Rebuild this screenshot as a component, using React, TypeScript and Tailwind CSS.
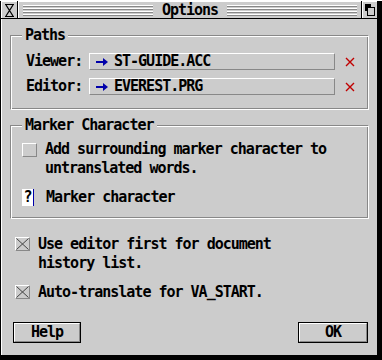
const mono = "font-['DejaVu_Sans_Mono','Liberation_Mono',monospace]";
const groupFrame =
  "border border-t-[#888] border-l-[#888] border-r-white border-b-white shadow-[inset_1px_1px_0_#fff,inset_-1px_-1px_0_#888] p-0 m-0";

function Arrow() {
  return (
    <svg width="12" height="8" viewBox="0 0 12 8" className="shrink-0">
      <path d="M0 3h8v2H0z" fill="#0000aa" />
      <path d="M7 0l5 4-5 4z" fill="#0000aa" />
    </svg>
  );
}

function RemoveMark() {
  return (
    <svg width="10" height="10" viewBox="0 0 10 10" className="shrink-0">
      <path d="M1 1l8 8M9 1l-8 8" stroke="#c00000" strokeWidth="1.4" />
    </svg>
  );
}

function CheckBox({ checked }: { checked?: boolean }) {
  return (
    <div className="w-[15px] h-[14px] shrink-0 border border-t-white border-l-white border-r-[#888] border-b-[#888] bg-[#cccccc] flex items-center justify-center">
      {checked && (
        <svg width="13" height="12" viewBox="0 0 13 12">
          <path d="M0.5 0.5l12 11M12.5 0.5l-12 11" stroke="#444" strokeWidth="1" />
        </svg>
      )}
    </div>
  );
}

function Stripes() {
  return (
    <div className="flex-1 flex flex-col gap-px">
      {[0, 1, 2, 3].map((i) => (
        <div key={i} className="flex flex-col">
          <div className="h-px bg-white" />
          <div className="h-px bg-[#888]" />
        </div>
      ))}
    </div>
  );
}

function PathRow({ label, file }: { label: string; file: string }) {
  return (
    <div className="flex items-center">
      <span className="w-[56px]">{label}</span>
      <div className="ml-[7px] w-[246px] h-[17px] border border-t-white border-l-white border-r-[#888] border-b-[#888] flex items-center pl-[6px]">
        <Arrow />
        <span className="ml-[6px] leading-[15px]">{file}</span>
      </div>
      <div className="ml-[10px]">
        <RemoveMark />
      </div>
    </div>
  );
}

function Button({ children, width }: { children: string; width: string }) {
  return (
    <div className={`${width} h-[21px] border border-black bg-[#cccccc]`}>
      <div className="h-full border border-t-white border-l-white border-r-[#888] border-b-[#888] flex items-center justify-center leading-[15px]">
        {children}
      </div>
    </div>
  );
}

export default function App() {
  return (
    <div className={`w-[382px] h-[360px] bg-black ${mono} text-[15px] leading-[19px] font-bold tracking-[-1px] text-black`}>
      <div className="w-[376px] h-[354px] ml-px mt-px bg-[#cccccc] flex flex-col">
        {/* title bar */}
        <div className="h-[18px] flex border-b border-black">
          <div className="w-[16px] border-t border-l border-white flex items-center justify-center">
            <svg width="9" height="13" viewBox="0 0 9 13">
              <path d="M0 0.5h9M0 12.5h9" stroke="#000" />
              <path d="M1 1l7 11M8 1l-7 11" stroke="#000" strokeWidth="1.3" />
            </svg>
          </div>
          <div className="w-px bg-black" />
          <div className="flex-1 border-t border-l border-white flex items-center px-[4px]">
            <Stripes />
            <span className="px-[9px] leading-[15px]">Options</span>
            <Stripes />
          </div>
          <div className="w-px bg-black" />
          <div className="w-[15px] border-t border-l border-white flex items-center justify-center">
            <svg width="10" height="12" viewBox="0 0 10 12">
              <rect x="0" y="0" width="6" height="7" fill="#000" />
              <rect x="2.5" y="3.5" width="7" height="8" fill="#ccc" stroke="#000" />
            </svg>
          </div>
        </div>

        {/* body */}
        <div className="flex-1 flex flex-col px-[8px] border-l border-white">
          <fieldset className={`mt-[7px] ${groupFrame}`}>
            <legend className="ml-[11px] px-[3px] bg-[#cccccc]">Paths</legend>
            <div className="pt-[7px] pb-[13px] pl-[15px] flex flex-col gap-[6px]">
              <PathRow label="Viewer:" file="ST-GUIDE.ACC" />
              <PathRow label="Editor:" file="EVEREST.PRG" />
            </div>
          </fieldset>

          <fieldset className={`mt-[6px] ${groupFrame}`}>
            <legend className="ml-[11px] px-[3px] bg-[#cccccc]">Marker Character</legend>
            <div className="pt-[5px] pb-[11px] pl-[11px] flex flex-col gap-[10px]">
              <div className="flex items-start">
                <div className="mt-[3px]">
                  <CheckBox />
                </div>
                <span className="ml-[8px]">
                  Add surrounding marker character to
                  <br />
                  untranslated words.
                </span>
              </div>
              <div className="flex items-center">
                <div className="flex items-center">
                  <div className="w-[11px] h-[17px] bg-white flex items-center justify-center leading-[15px]">?</div>
                  <div className="w-px h-[17px] bg-[#0000aa]" />
                </div>
                <span className="ml-[12px]">Marker character</span>
              </div>
            </div>
          </fieldset>

          <div className="mt-[16px] pl-[5px] flex flex-col gap-[10px]">
            <div className="flex items-start">
              <div className="mt-[2px]">
                <CheckBox checked />
              </div>
              <span className="ml-[8px]">
                Use editor first for document
                <br />
                history list.
              </span>
            </div>
            <div className="flex items-start">
              <div className="mt-[2px]">
                <CheckBox checked />
              </div>
              <span className="ml-[8px]">Auto-translate for VA_START.</span>
            </div>
          </div>

          <div className="mt-[20px] pl-[3px] pr-[1px] flex justify-between">
            <Button width="w-[68px]">Help</Button>
            <Button width="w-[70px]">OK</Button>
          </div>
        </div>
      </div>
    </div>
  );
}
